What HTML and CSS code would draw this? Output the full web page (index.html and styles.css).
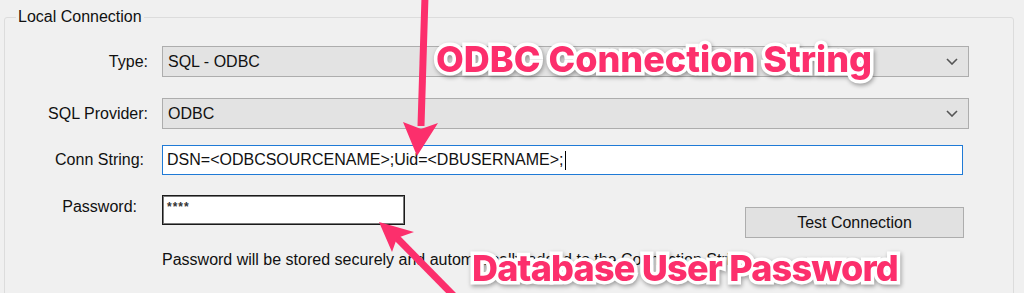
FILE: index.html
```html
<!DOCTYPE html>
<html lang="en">
  <head>
    <meta charset="UTF-8" />
    <title>Local Connection</title>
    <link rel="stylesheet" href="styles.css">
  </head>
  <body>
    <fieldset class="group">
      <legend>Local Connection</legend>

      <div class="row">
        <label class="lbl">Type:</label>
        <div class="combo">
          <span>SQL - ODBC</span>
          <svg class="chevron" width="12" height="7" viewBox="0 0 12 7"><path d="M1 1 L6 6 L11 1" /></svg>
        </div>
      </div>

      <div class="row row-provider">
        <label class="lbl">SQL Provider:</label>
        <div class="combo">
          <span>ODBC</span>
          <svg class="chevron" width="12" height="7" viewBox="0 0 12 7"><path d="M1 1 L6 6 L11 1" /></svg>
        </div>
      </div>

      <div class="row row-conn">
        <label class="lbl lbl-conn">Conn String:</label>
        <div class="textbox focused">DSN=&lt;ODBCSOURCENAME&gt;;Uid=&lt;DBUSERNAME&gt;;<span class="caret"></span></div>
      </div>

      <div class="row row-pass">
        <label class="lbl lbl-pass">Password:</label>
        <div class="textbox pass"><span class="stars">****</span></div>
        <button class="btn">Test Connection</button>
      </div>

      <p class="note">Password will be stored securely and automatically added to the Connection String</p>
    </fieldset>

    <!-- annotations drawn over the form -->
    <div class="notes-layer">
      <svg class="arrows" width="1024" height="293" viewBox="0 0 1024 293">
        <line x1="425" y1="-4" x2="421" y2="126" />
        <polygon points="403,122 421,129 438,123 417,156" />
        <line x1="455" y1="297" x2="396" y2="237" />
        <polygon points="379,222 414,232 397,238 392,252" />
      </svg>
      <div class="callout callout-odbc">ODBC Connection String</div>
      <div class="callout callout-pass">Database User Password</div>
    </div>
  </body>
</html>
```

FILE: styles.css
```css
html {
  overflow: hidden;
}
body {
  margin: 0;
  height: 293px;
  overflow: hidden;
  background-color: #f0f0f0;
  font-family: "Liberation Sans", Arial, sans-serif;
  font-size: 16px;
  color: #111;
}
.group {
  margin: 8px 10px 0 4px;
  padding: 20px 0 40px 12px;
  border: 1px solid #dcdcdc;
  border-radius: 3px;
}
.group legend {
  padding: 0 2px;
  margin-left: -1px;
  line-height: 18px;
}
.row {
  display: flex;
  align-items: center;
  gap: 14px;
}
.lbl {
  width: 131px;
  text-align: right;
  flex-shrink: 0;
}
.lbl-conn {
  width: 127px;
  padding-right: 4px;
}
.lbl-pass {
  width: 120px;
  padding-right: 11px;
}
.row-provider {
  margin-top: 21px;
}
.row-conn {
  margin-top: 16px;
}
.row-pass {
  margin-top: 20px;
  align-items: flex-start;
}
.row-pass .lbl {
  line-height: 24px;
}
.combo {
  width: 807px;
  height: 31px;
  box-sizing: border-box;
  background-color: #e3e3e3;
  border: 1px solid #adadad;
  display: flex;
  align-items: center;
  justify-content: space-between;
  padding: 0 10px 0 5px;
}
.chevron path {
  fill: none;
  stroke: #555;
  stroke-width: 1.6;
}
.textbox {
  background-color: #fff;
  box-sizing: border-box;
  height: 30px;
  display: flex;
  align-items: center;
  padding-left: 4px;
}
.focused {
  width: 801px;
  border: 1px solid #1f7ad6;
}
.caret {
  display: inline-block;
  width: 1px;
  height: 19px;
  margin-left: 1px;
  background-color: #000;
}
.pass {
  width: 243px;
  border: 1px solid #1a1a1a;
  box-shadow: inset 0 0 0 1px #7a7a7a;
  align-items: flex-start;
}
.stars {
  font-size: 12px;
  font-weight: bold;
  letter-spacing: 1px;
  margin-top: 4px;
  color: #333;
}
.btn {
  margin-top: 12px;
  margin-left: 326px;
  width: 219px;
  height: 31px;
  background-color: #e1e1e1;
  border: 1px solid #adadad;
  font-family: inherit;
  font-size: 16px;
  color: #111;
  padding: 0;
}
.note {
  margin: 13px 0 0 145px;
  line-height: 18px;
}
.notes-layer {
  position: absolute;
  top: 0;
  left: 0;
  width: 1024px;
  height: 293px;
  pointer-events: none;
}
.arrows line {
  stroke: #fc2f6c;
  stroke-width: 7;
}
.arrows polygon {
  fill: #fc2f6c;
}
.callout {
  position: absolute;
  font-family: Inter, "Open Sans", sans-serif;
  font-weight: 800;
  font-size: 36px;
  line-height: 1;
  color: #fc2f6c;
  -webkit-text-stroke: 7px #fff;
  paint-order: stroke fill;
  filter: drop-shadow(1px 2px 2px rgba(0, 0, 0, 0.35));
  white-space: nowrap;
}
.callout-odbc {
  left: 436px;
  top: 41px;
}
.callout-pass {
  left: 472px;
  top: 250px;
  letter-spacing: -0.8px;
}
```
